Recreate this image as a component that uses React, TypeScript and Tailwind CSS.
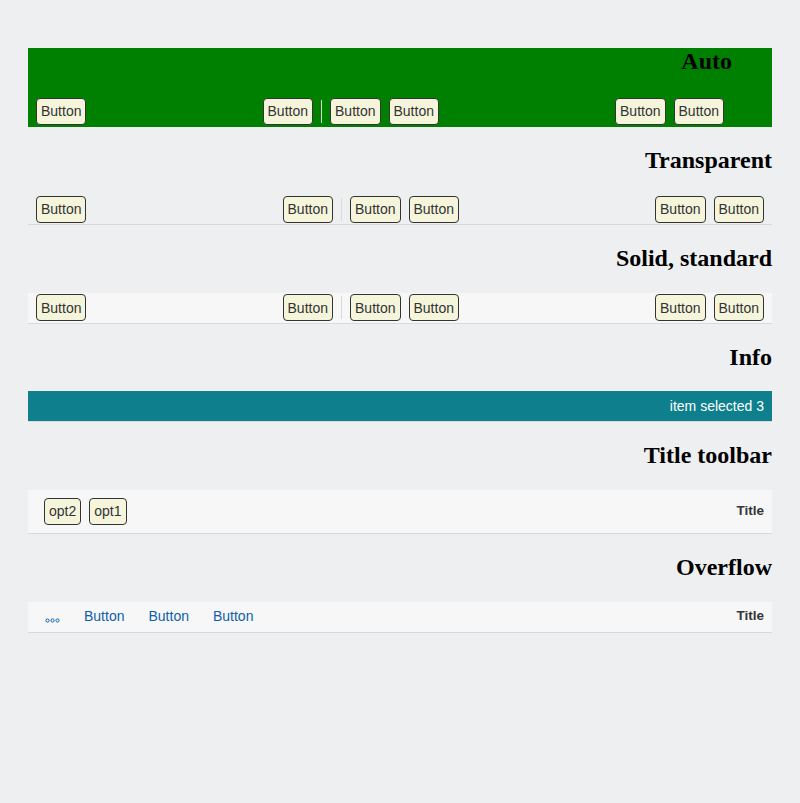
import React from 'react';

const sans = { fontFamily: '"Liberation Sans", Arial, sans-serif' };

const Btn = ({ label }: { label: string }) => (
  <button className="h-[27px] shrink-0 rounded-[4px] border border-[#333333] bg-[#f5f5dc] px-[4px] text-[14px] leading-none text-[#333333]">
    {label}
  </button>
);

const Sep = () => <div className="h-[23px] w-px shrink-0 bg-[#d9d9d9]" />;

const Spacer = () => <div className="flex-1" />;

const Heading = ({ children, className = '' }: { children: React.ReactNode; className?: string }) => (
  <h2
    className={`my-[20px] text-right text-[24px] font-bold leading-[27.6px] text-black ${className}`}
    style={{ fontFamily: '"Liberation Serif", "Times New Roman", serif' }}
  >
    {children}
  </h2>
);

const ButtonRow = ({ ghost }: { ghost?: boolean }) => (
  <>
    <Btn label="Button" />
    <Spacer />
    <Btn label="Button" />
    <Sep />
    <Btn label="Button" />
    <Btn label="Button" />
    <Spacer />
    <Btn label="Button" />
    <Btn label="Button" />
    {ghost && <div className="w-8 shrink-0" />}
  </>
);

export default function App() {
  return (
    <div className="min-h-[803px] bg-[#eeeff1] px-[28px] py-[28px]" style={sans}>
      {/* Auto */}
      <div className="bg-[#008000]">
        <Heading className="pr-[40px]">Auto</Heading>
        <div className="flex h-[31px] items-center gap-2 px-2">
          <ButtonRow ghost />
        </div>
      </div>

      {/* Transparent */}
      <Heading>Transparent</Heading>
      <div className="flex h-[31px] items-center gap-2 border-b border-[#d9d9d9] px-2">
        <ButtonRow />
      </div>

      {/* Solid */}
      <Heading>Solid, standard</Heading>
      <div className="flex h-[31px] items-center gap-2 border-b border-[#d9d9d9] bg-[#f7f7f7] px-2">
        <ButtonRow />
      </div>

      {/* Info */}
      <Heading>Info</Heading>
      <div className="flex h-[31px] items-center justify-end border-b border-[#d9d9d9] bg-[#0e7f8c] px-2">
        <span className="text-[14px] text-white">item selected 3</span>
      </div>

      {/* Title toolbar */}
      <Heading>Title toolbar</Heading>
      <div className="flex h-[44px] items-center gap-2 border-b border-[#d9d9d9] bg-[#f7f7f7] pl-4 pr-2">
        <Btn label="opt2" />
        <Btn label="opt1" />
        <Spacer />
        <span className="text-[13.5px] font-bold text-[#32363a]">Title</span>
      </div>

      {/* Overflow */}
      <Heading>Overflow</Heading>
      <div className="flex h-[31px] items-center gap-2 border-b border-[#d9d9d9] bg-[#f7f7f7] px-2">
        <button className="flex h-[26px] w-8 shrink-0 items-center justify-center pt-[7px]">
          <svg width="15" height="5" viewBox="0 0 15 5" fill="none" stroke="#0f5fab" strokeWidth="1">
            <circle cx="2.5" cy="2.5" r="1.6" />
            <circle cx="7.5" cy="2.5" r="1.6" />
            <circle cx="12.5" cy="2.5" r="1.6" />
          </svg>
        </button>
        {['Button', 'Button', 'Button'].map((b, i) => (
          <button key={i} className="h-[26px] shrink-0 px-2 text-[14px] text-[#0f5fab]">
            {b}
          </button>
        ))}
        <Spacer />
        <span className="text-[13.5px] font-bold text-[#32363a]">Title</span>
      </div>
    </div>
  );
}
